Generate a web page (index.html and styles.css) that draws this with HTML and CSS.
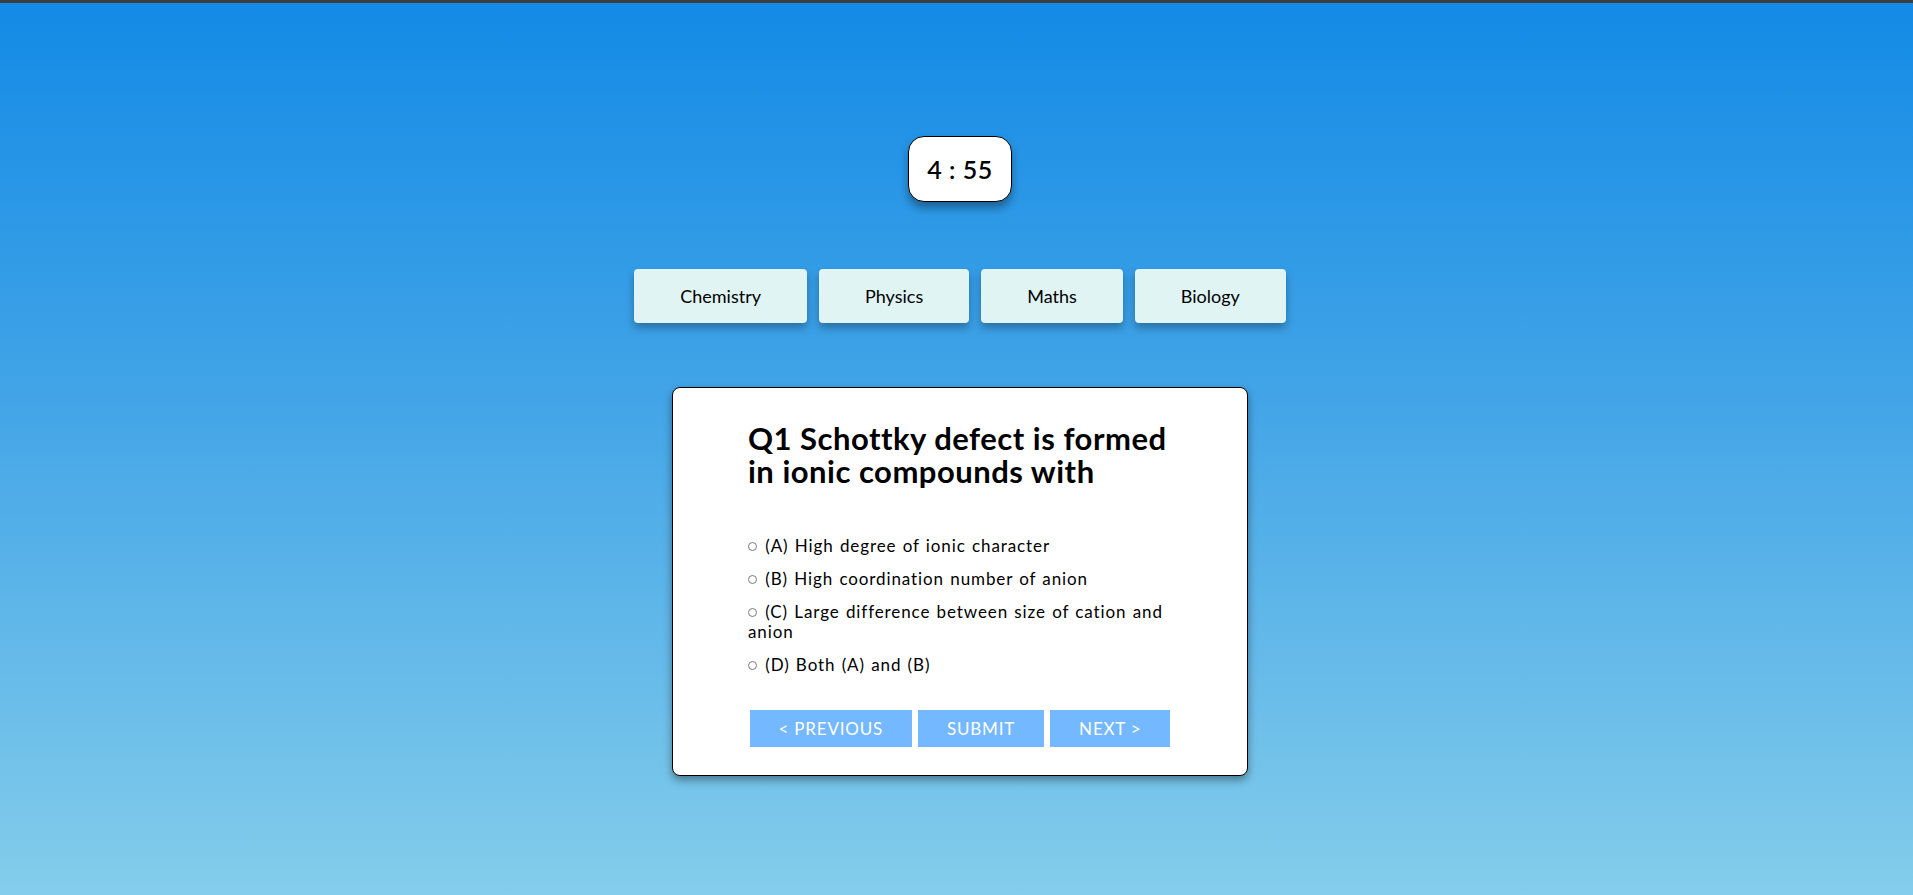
FILE: index.html
```html
<!DOCTYPE html>
<html lang="en">
<head>
<meta charset="utf-8">
<title>Quiz</title>
<link rel="stylesheet" href="styles.css">
</head>
<body>
<div class="topbar"></div>
<div class="page">
  <div class="timer">4 : 55</div>
  <nav class="tabs">
    <button class="tab">Chemistry</button>
    <button class="tab">Physics</button>
    <button class="tab">Maths</button>
    <button class="tab">Biology</button>
  </nav>
  <section class="card">
    <h1 class="question">Q1 Schottky defect is formed in ionic compounds with</h1>
    <div class="options">
      <label class="option"><input type="radio" name="q1" class="radio"> (A) High degree of ionic character</label>
      <label class="option"><input type="radio" name="q1" class="radio"> (B) High coordination number of anion</label>
      <label class="option"><input type="radio" name="q1" class="radio"> (C) Large difference between size of cation and anion</label>
      <label class="option"><input type="radio" name="q1" class="radio"> (D) Both (A) and (B)</label>
    </div>
    <div class="actions">
      <button class="action">&lt; Previous</button>
      <button class="action">Submit</button>
      <button class="action">Next &gt;</button>
    </div>
  </section>
</div>
</body>
</html>
```

FILE: styles.css
```css
html, body {
  margin: 0;
  padding: 0;
}

body {
  min-height: 100vh;
  background: linear-gradient(180deg, #138ae6 0%, #43a5e7 45%, #84cdeb 100%);
  font-family: Lato, "Noto Sans", sans-serif;
  color: #000;
}

.topbar {
  height: 3px;
  background: #3e3e3e;
}

.page {
  display: flex;
  flex-direction: column;
  align-items: center;
  padding-left: 7px;
  padding-bottom: 40px;
}

.timer {
  margin-top: 133px;
  width: 104px;
  height: 66px;
  box-sizing: border-box;
  border: 1px solid #000;
  border-radius: 16px;
  background: #fff;
  display: flex;
  align-items: center;
  justify-content: center;
  font-size: 25px;
  font-weight: 600;
  letter-spacing: 0.5px;
  box-shadow: 0 6px 8px rgba(0, 0, 0, 0.35);
}

.tabs {
  margin-top: 67px;
  display: flex;
  gap: 12px;
}

.tab {
  height: 54px;
  padding: 0 46px;
  border: none;
  border-radius: 4px;
  background: #e1f4f4;
  font-family: inherit;
  font-size: 18px;
  color: #000;
  box-shadow: 0 5px 8px rgba(0, 0, 0, 0.3);
  cursor: pointer;
}

.card {
  margin-top: 64px;
  width: 576px;
  height: 389px;
  box-sizing: border-box;
  border: 1px solid #000;
  border-radius: 8px;
  background: #fff;
  padding: 34px 75px 0;
  box-shadow: 0 4px 8px rgba(0, 0, 0, 0.4);
}

.question {
  margin: 0;
  font-size: 31px;
  line-height: 33px;
  font-weight: 700;
  letter-spacing: 0.5px;
}

.options {
  margin-top: 48px;
  display: flex;
  flex-direction: column;
  gap: 13px;
}

.option {
  font-size: 17px;
  line-height: 20px;
  letter-spacing: 0.9px;
  word-spacing: 1px;
  display: block;
}

.radio {
  appearance: none;
  -webkit-appearance: none;
  margin: 0 2px 0 0;
  width: 9px;
  height: 9px;
  border: 1px solid #7a7a7a;
  border-radius: 50%;
  box-sizing: border-box;
  vertical-align: 1px;
}

.actions {
  margin-top: 35px;
  display: flex;
  justify-content: center;
  gap: 6px;
}

.action {
  flex: none;
  white-space: nowrap;
  height: 37px;
  padding: 0 29px;
  border: none;
  background: #74b9ff;
  color: #fff;
  font-family: inherit;
  font-size: 17px;
  text-transform: uppercase;
  letter-spacing: 0.8px;
  cursor: pointer;
}
```
